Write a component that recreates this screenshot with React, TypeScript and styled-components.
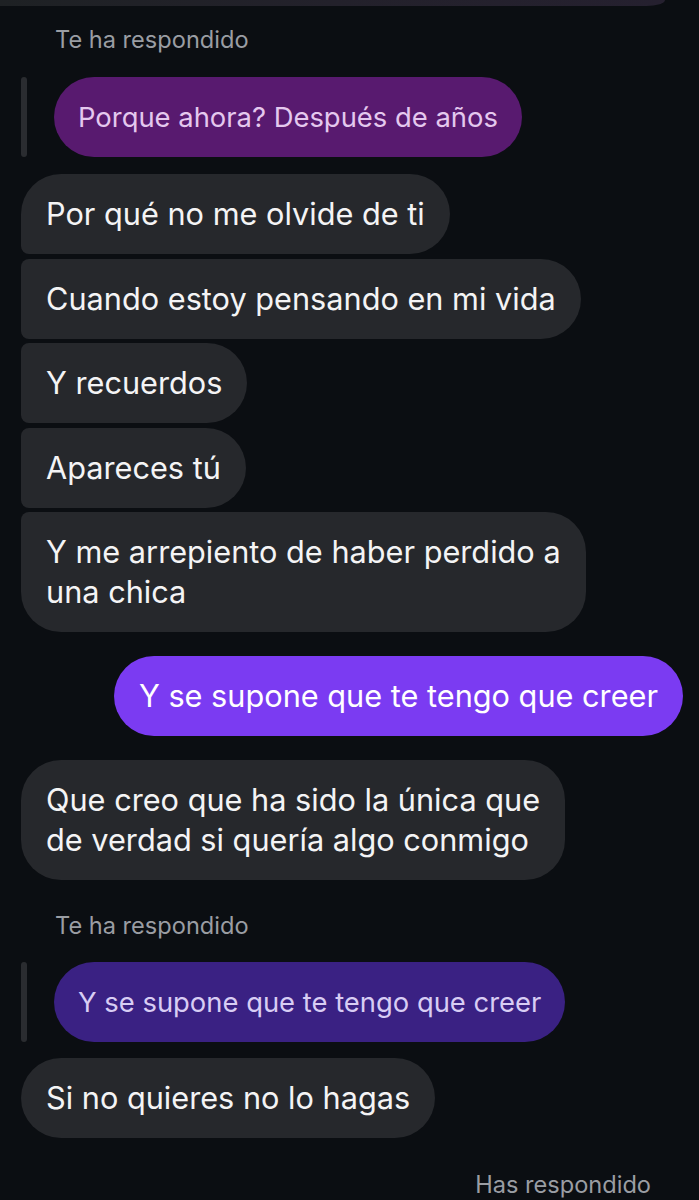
import React from "react";
import styled, { createGlobalStyle, css } from "styled-components";

const Global = createGlobalStyle`
  html, body {
    margin: 0;
    padding: 0;
    background: #0b0e12;
  }
  body {
    font-family: Inter, "Noto Sans", "Liberation Sans", sans-serif;
    -webkit-font-smoothing: antialiased;
  }
`;

const Screen = styled.div`
  width: 699px;
  height: 1200px;
  overflow: hidden;
  background: #0b0e12;
  display: flex;
  flex-direction: column;
  padding: 0 16px 0 21px;
  box-sizing: border-box;
`;

const TopBubbleTail = styled.div`
  height: 6px;
  margin-left: -21px;
  width: 665px;
  flex-shrink: 0;
  background: linear-gradient(90deg, #1e2124 0%, #23212b 50%, #25202f 100%);
  border-radius: 0 0 22px 0 / 0 0 7px 0;
`;

const Label = styled.div<{ $align?: "left" | "right"; $mt: number }>`
  margin-top: ${(p) => p.$mt}px;
  font-size: 23.6px;
  line-height: 24px;
  color: #9a9da3;
  padding-left: 34px;
  white-space: nowrap;
  ${(p) =>
    p.$align === "right" &&
    css`
      align-self: flex-end;
      padding-left: 0;
      padding-right: 32px;
    `}
`;

const ReplyRow = styled.div<{ $mt: number }>`
  display: flex;
  align-items: stretch;
  gap: 27px;
  margin-top: ${(p) => p.$mt}px;
`;

const ReplyBar = styled.div`
  width: 6px;
  border-radius: 3px;
  background: #2a2c30;
  flex-shrink: 0;
`;

const QuoteBubble = styled.div<{ $bg: string; $fg: string }>`
  background: ${(p) => p.$bg};
  color: ${(p) => p.$fg};
  border-radius: 40px;
  padding: 20px 24px;
  font-size: 27.4px;
  line-height: 40px;
  white-space: nowrap;
`;

const Group = styled.div<{ $mt: number }>`
  display: flex;
  flex-direction: column;
  align-items: flex-start;
  gap: 4.5px;
  margin-top: ${(p) => p.$mt}px;
`;

type Pos = "single" | "first" | "middle" | "last";

const Bubble = styled.div<{ $pos?: Pos; $mine?: boolean; $mt?: number }>`
  box-sizing: border-box;
  background: #26282c;
  color: #f4f4f5;
  font-size: 30.7px;
  line-height: 40px;
  padding: 20px 25px;
  border-radius: 40px;
  max-width: 650px;
  white-space: nowrap;
  margin-top: ${(p) => p.$mt ?? 0}px;
  ${(p) => p.$pos === "first" && css`border-bottom-left-radius: 8px;`}
  ${(p) =>
    p.$pos === "middle" &&
    css`
      border-top-left-radius: 8px;
      border-bottom-left-radius: 8px;
    `}
  ${(p) => p.$pos === "last" && css`border-top-left-radius: 8px;`}
  ${(p) =>
    p.$mine &&
    css`
      align-self: flex-end;
      background: #7b3bf2;
      color: #ffffff;
    `}
`;

export default function App() {
  return (
    <>
      <Global />
      <Screen>
        <TopBubbleTail />
        <Label $mt={22}>Te ha respondido</Label>
        <ReplyRow $mt={25}>
          <ReplyBar />
          <QuoteBubble $bg="#581a6f" $fg="#e4c8ee">
            Porque ahora? Después de años
          </QuoteBubble>
        </ReplyRow>
        <Group $mt={17}>
          <Bubble $pos="first">Por qué no me olvide de ti</Bubble>
          <Bubble $pos="middle">Cuando estoy pensando en mi vida</Bubble>
          <Bubble $pos="middle">Y recuerdos</Bubble>
          <Bubble $pos="middle">Apareces tú</Bubble>
          <Bubble $pos="last">
            Y me arrepiento de haber perdido a
            <br />
            una chica
          </Bubble>
        </Group>
        <Bubble $mine $mt={24}>
          Y se supone que te tengo que creer
        </Bubble>
        <Group $mt={24}>
          <Bubble>
            Que creo que ha sido la única que
            <br />
            de verdad si quería algo conmigo
          </Bubble>
        </Group>
        <Label $mt={34}>Te ha respondido</Label>
        <ReplyRow $mt={24}>
          <ReplyBar />
          <QuoteBubble $bg="#3a2183" $fg="#d8cdf4">
            Y se supone que te tengo que creer
          </QuoteBubble>
        </ReplyRow>
        <Group $mt={16}>
          <Bubble>Si no quieres no lo hagas</Bubble>
        </Group>
        <Label $align="right" $mt={35}>
          Has respondido
        </Label>
      </Screen>
    </>
  );
}
